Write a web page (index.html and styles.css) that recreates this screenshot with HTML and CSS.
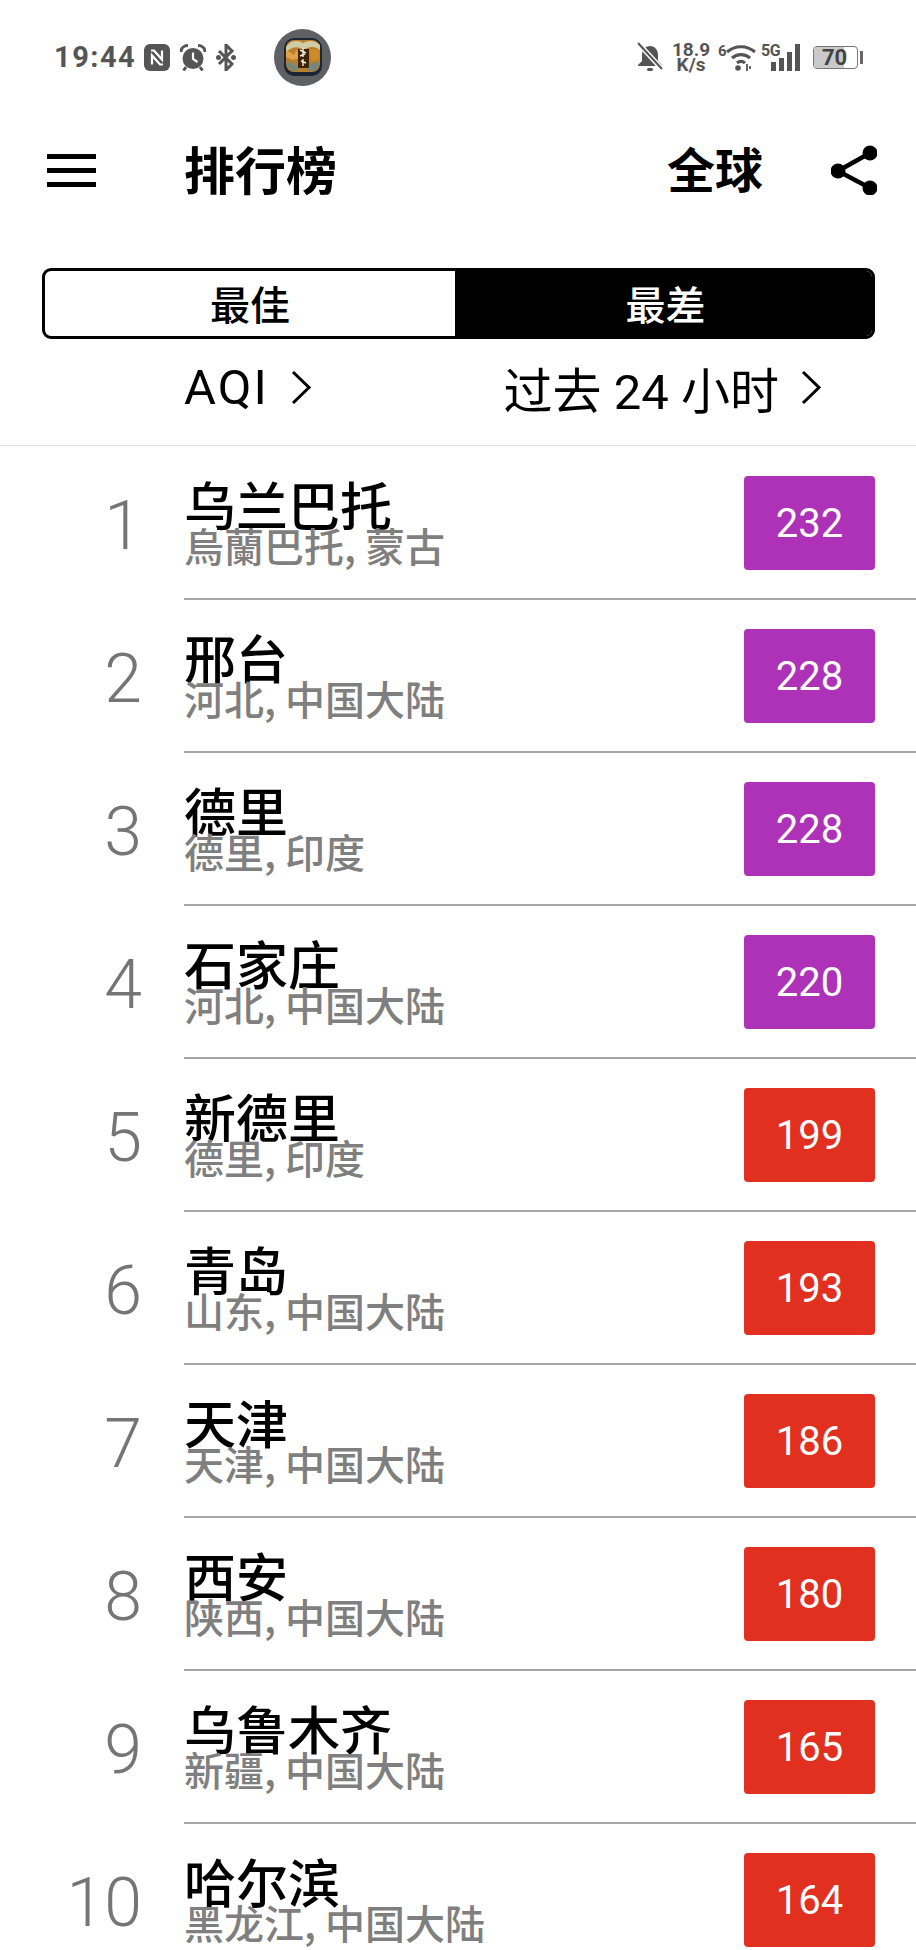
FILE: index.html
```html
<!DOCTYPE html>
<html lang="zh-CN">
<head>
    <meta charset="UTF-8">
    <meta name="viewport" content="width=device-width, initial-scale=1.0">
    <title>排行榜</title>
    <link rel="stylesheet" href="styles.css">
</head>
<body>
    <div class="screen">
        <div class="status-bar">
            <div class="status-left">
                <span class="clock">19:44</span>
                <svg class="icon-nfc" viewBox="0 0 26 27"><rect x="0" y="0" width="26" height="27" rx="6" fill="#555"/><path d="M7 6.500h3l8 9V6.500M19 20.500h-3l-8-9v9" fill="none" stroke="#fff" stroke-width="2.200"/></svg>
                <svg class="icon-alarm" viewBox="0 0 26 27"><circle cx="13" cy="14.500" r="10.500" fill="#555"/><path d="M13 8.500V15l4.500 3" fill="none" stroke="#fff" stroke-width="2.200"/><path d="M1 8c0-4 3-6.500 7-6.500M25 8c0-4-3-6.500-7-6.500" stroke="#555" stroke-width="3" fill="none"/><path d="M6 23l-2.500 3.500M20 23l2.500 3.500" stroke="#555" stroke-width="3" fill="none"/></svg>
                <svg class="icon-bt" viewBox="0 0 20 27"><path d="M3 7l13 13-6 6V1l6 6L3 20" fill="none" stroke="#555" stroke-width="3"/><circle cx="2.500" cy="13.500" r="2.500" fill="#555"/><circle cx="17.500" cy="13.500" r="2.500" fill="#555"/></svg>
                <div class="avatar">
                    <svg viewBox="0 0 38 38">
                        <rect x="0" y="0" width="38" height="38" rx="10" fill="#1c2536"/>
                        <rect x="2" y="2" width="34" height="32" rx="8" fill="#b97f2a"/>
                        <path d="M2 9c5-7 12-7 17-4 5-3 12-3 17 2v5c-5-4-11-4-16 0-5-4-12-4-18 2z" fill="#cfcda6"/>
                        <path d="M2 12l8 5 3-6 2 9-6 2-7-3z" fill="#e3a24a"/>
                        <path d="M14 11h11v19H14z" fill="#3d2408"/>
                        <path d="M25 12l10-1v10l-8 2z" fill="#d08a2c"/>
                        <path d="M2 26c5-4 10-1 13 7H8zM36 26c-5-4-10-1-13 7h8z" fill="#74877d"/>
                        <path d="M16 12l6 3M19 10v9M16 18l5-2M17 23l5 2M19 21v7" stroke="#f3edd6" stroke-width="1.400" fill="none"/>
                    </svg>
                </div>
            </div>
            <div class="status-right">
                <svg class="icon-mute" viewBox="0 0 26 30"><path d="M13 4c-5 0-8 4-8 9v6l-4 4v1h24v-1l-4-4v-6c0-5-3-9-8-9z" fill="#555"/><rect x="10" y="26" width="6" height="3" rx="1.500" fill="#555"/><path d="M1 1l24 26" stroke="#fff" stroke-width="5"/><path d="M1 1l24 26" stroke="#555" stroke-width="2"/></svg>
                <div class="speed"><span>18.9</span><span>K/s</span></div>
                <div class="wifi">
                    <span class="wifi-gen">6</span>
                    <svg viewBox="0 0 30 28"><path d="M1 9c8-7 20-7 28 0M6 15c5-4.500 13-4.500 18 0M11 20c2.500-2 5.500-2 8 0" fill="none" stroke="#555" stroke-width="3.200"/><circle cx="12" cy="25" r="2.800" fill="#555"/><path d="M21 21v7M24 23v3" stroke="#555" stroke-width="1.800"/></svg>
                </div>
                <div class="signal">
                    <span class="signal-gen">5G</span>
                    <div class="bars"><i class="bar-1"></i><i class="bar-2"></i><i class="bar-3"></i><i class="bar-4"></i></div>
                </div>
                <div class="battery"><span class="battery-fill"></span><span class="battery-level">70</span></div>
                <span class="battery-cap"></span>
            </div>
        </div>

        <div class="toolbar">
            <div class="menu"><span></span><span></span><span></span></div>
            <h1>排行榜</h1>
            <span class="region">全球</span>
            <svg class="icon-share" viewBox="0 0 46 50"><path d="M39 8L7 26l32 17" fill="none" stroke="#000" stroke-width="4.500"/><circle cx="39" cy="8" r="7.500"/><circle cx="7" cy="26" r="7.500"/><circle cx="39" cy="43" r="7.500"/></svg>
        </div>

        <div class="tabs">
            <div class="tab">最佳</div>
            <div class="tab selected">最差</div>
        </div>

        <div class="filters">
            <div class="filter metric">AQI<svg viewBox="0 0 21 35"><path d="M2 2l16 15.500L2 33" fill="none" stroke="#000" stroke-width="3"/></svg></div>
            <div class="filter">过去 24 小时<svg viewBox="0 0 21 35"><path d="M2 2l16 15.500L2 33" fill="none" stroke="#000" stroke-width="3"/></svg></div>
        </div>

        <div class="ranking">
            <div class="row">
                <div class="rank">1</div>
                <div class="row-main">
                    <div class="place"><div class="city">乌兰巴托</div><div class="region-name">烏蘭巴托, 蒙古</div></div>
                    <div class="aqi purple">232</div>
                </div>
            </div>
            <div class="row">
                <div class="rank">2</div>
                <div class="row-main">
                    <div class="place"><div class="city">邢台</div><div class="region-name">河北, 中国大陆</div></div>
                    <div class="aqi purple">228</div>
                </div>
            </div>
            <div class="row">
                <div class="rank">3</div>
                <div class="row-main">
                    <div class="place"><div class="city">德里</div><div class="region-name">德里, 印度</div></div>
                    <div class="aqi purple">228</div>
                </div>
            </div>
            <div class="row">
                <div class="rank">4</div>
                <div class="row-main">
                    <div class="place"><div class="city">石家庄</div><div class="region-name">河北, 中国大陆</div></div>
                    <div class="aqi purple">220</div>
                </div>
            </div>
            <div class="row">
                <div class="rank">5</div>
                <div class="row-main">
                    <div class="place"><div class="city">新德里</div><div class="region-name">德里, 印度</div></div>
                    <div class="aqi red">199</div>
                </div>
            </div>
            <div class="row">
                <div class="rank">6</div>
                <div class="row-main">
                    <div class="place"><div class="city">青岛</div><div class="region-name">山东, 中国大陆</div></div>
                    <div class="aqi red">193</div>
                </div>
            </div>
            <div class="row">
                <div class="rank">7</div>
                <div class="row-main">
                    <div class="place"><div class="city">天津</div><div class="region-name">天津, 中国大陆</div></div>
                    <div class="aqi red">186</div>
                </div>
            </div>
            <div class="row">
                <div class="rank">8</div>
                <div class="row-main">
                    <div class="place"><div class="city">西安</div><div class="region-name">陕西, 中国大陆</div></div>
                    <div class="aqi red">180</div>
                </div>
            </div>
            <div class="row">
                <div class="rank">9</div>
                <div class="row-main">
                    <div class="place"><div class="city">乌鲁木齐</div><div class="region-name">新疆, 中国大陆</div></div>
                    <div class="aqi red">165</div>
                </div>
            </div>
            <div class="row">
                <div class="rank">10</div>
                <div class="row-main">
                    <div class="place"><div class="city">哈尔滨</div><div class="region-name">黑龙江, 中国大陆</div></div>
                    <div class="aqi red">164</div>
                </div>
            </div>
        </div>
    </div>
</body>
</html>
```

FILE: styles.css
```css
html, body {
    margin: 0;
    padding: 0;
    background-color: #ffffff;
}
.screen {
    width: 916px;
    height: 1950px;
    overflow: hidden;
    font-family: "Roboto", "Noto Sans CJK SC", sans-serif;
    color: #000;
}
.status-bar {
    height: 114px;
    display: flex;
    justify-content: space-between;
    align-items: center;
    box-sizing: border-box;
    padding: 0 53px 0 54px;
    color: #555;
}
.status-left,
.status-right {
    display: flex;
    align-items: center;
}
.clock {
    font-size: 29px;
    font-weight: 700;
    letter-spacing: 1.5px;
    width: 90px;
}
.icon-nfc {
    width: 26px;
    height: 27px;
    margin-right: 10px;
}
.icon-alarm {
    width: 26px;
    height: 27px;
    margin-right: 10px;
}
.icon-bt {
    width: 20px;
    height: 27px;
    margin-right: 38px;
}
.avatar {
    width: 57px;
    height: 57px;
    border-radius: 50%;
    background-color: #5f6063;
    display: flex;
    align-items: center;
    justify-content: center;
}
.avatar svg {
    width: 38px;
    height: 38px;
}
.icon-mute {
    width: 26px;
    height: 30px;
    margin-right: 9px;
}
.speed {
    display: flex;
    flex-direction: column;
    align-items: center;
    width: 38px;
    font-size: 19px;
    font-weight: 700;
    line-height: 15px;
    margin-right: 8px;
}
.wifi {
    display: flex;
    align-items: flex-start;
    margin-right: 5px;
}
.wifi-gen {
    font-size: 15px;
    font-weight: 700;
    line-height: 16px;
    width: 8px;
}
.wifi svg {
    width: 30px;
    height: 28px;
}
.signal {
    display: flex;
    align-items: flex-end;
    height: 28px;
    margin-right: 13px;
}
.signal-gen {
    font-size: 16px;
    font-weight: 700;
    line-height: 16px;
    align-self: flex-start;
    width: 10px;
    letter-spacing: -0.5px;
}
.bars {
    display: flex;
    align-items: flex-end;
    gap: 3px;
}
.bars i {
    display: block;
    width: 5px;
    background-color: #555;
}
.bar-1 { height: 9px; }
.bar-2 { height: 13px; }
.bar-3 { height: 19px; }
.bar-4 { height: 27px; }
.battery {
    width: 45px;
    height: 23px;
    box-sizing: border-box;
    border: 1px solid #777;
    border-radius: 4px;
    display: flex;
    align-items: center;
    position: relative;
    overflow: hidden;
}
.battery-fill {
    position: absolute;
    left: 0;
    top: 0;
    bottom: 0;
    width: 70%;
    background-color: #c9c9c9;
}
.battery-level {
    position: relative;
    font-size: 22px;
    font-weight: 700;
    color: #444;
    margin-left: 8px;
}
.battery-cap {
    width: 3px;
    height: 13px;
    margin-left: 2px;
    background-color: #666;
}
.toolbar {
    height: 112px;
    display: flex;
    align-items: center;
    box-sizing: border-box;
    padding: 0 39px 0 47px;
}
.menu {
    width: 49px;
    display: flex;
    flex-direction: column;
    gap: 9px;
    margin-right: 88px;
}
.menu span {
    display: block;
    height: 5px;
    background-color: #000;
}
h1 {
    flex: 1;
    margin: 0 0 5px;
    font-size: 51px;
    font-weight: 700;
    font-family: "Noto Sans CJK SC", sans-serif;
}
.region {
    font-size: 48px;
    font-weight: 700;
    font-family: "Noto Sans CJK SC", sans-serif;
    margin: 0 68px 7px 0;
}
.icon-share {
    width: 46px;
    height: 50px;
}
.tabs {
    margin: 42px 41px 0 42px;
    height: 71px;
    display: flex;
    box-sizing: border-box;
    border: 3px solid #000;
    border-radius: 9px;
    overflow: hidden;
}
.tab {
    width: 410px;
    display: flex;
    align-items: center;
    justify-content: center;
    box-sizing: border-box;
    padding-bottom: 2px;
    font-size: 40px;
    font-family: "Noto Sans CJK SC", sans-serif;
    font-weight: 500;
}
.tab.selected {
    flex: 1;
    padding-left: 4px;
    background-color: #000;
    color: #fff;
}
.filters {
    height: 107px;
    box-sizing: border-box;
    padding: 0 94px 9px 184px;
    display: flex;
    justify-content: space-between;
    align-items: center;
    border-bottom: 1px solid #e0e0e0;
}
.filter {
    font-size: 49px;
    display: flex;
    align-items: center;
    gap: 22px;
}
.filter.metric {
    letter-spacing: 2px;
}
.filter svg {
    width: 21px;
    height: 35px;
}
.row {
    height: 153px;
    display: flex;
    align-items: flex-start;
}
.rank {
    width: 184px;
    box-sizing: border-box;
    padding: 36px 42px 0 0;
    height: 124px;
    display: flex;
    align-items: center;
    justify-content: flex-end;
    font-size: 68px;
    font-weight: 300;
    color: #757575;
}
.row-main {
    flex: 1;
    height: 154px;
    display: flex;
    justify-content: space-between;
    box-sizing: border-box;
    padding: 30px 41px 0 0;
    border-bottom: 2px solid #a6a6a6;
}
.city {
    font-size: 52px;
    line-height: 50px;
    margin-top: 3px;
    font-weight: 500;
    font-family: "Noto Sans CJK SC", sans-serif;
}
.region-name {
    font-size: 40px;
    line-height: 44px;
    margin-top: -6px;
    font-weight: 500;
    color: #7f7f7f;
    font-family: "Noto Sans CJK SC", sans-serif;
}
.aqi {
    width: 131px;
    height: 94px;
    border-radius: 4px;
    display: flex;
    align-items: center;
    justify-content: center;
    color: #fff;
    font-size: 40px;
}
.purple {
    background-color: #ad32b8;
}
.red {
    background-color: #e1301f;
}
```
